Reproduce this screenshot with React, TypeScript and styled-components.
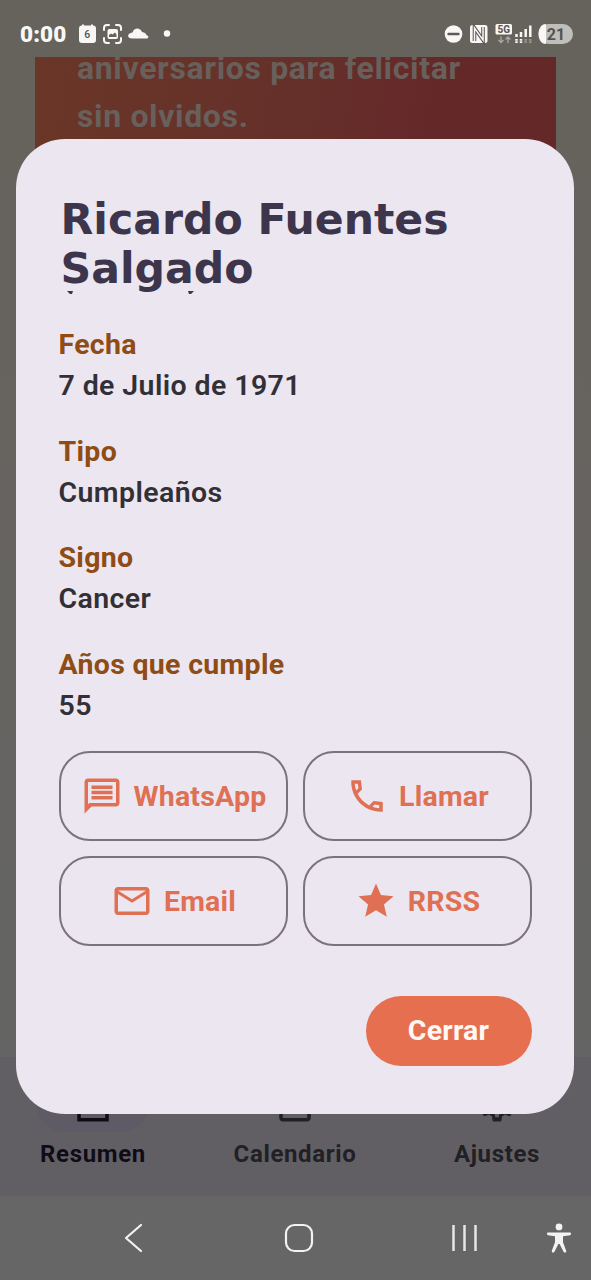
import React from "react";
import styled, { createGlobalStyle } from "styled-components";

const GlobalStyle = createGlobalStyle`
  * { box-sizing: border-box; }
  body { margin: 0; font-family: Roboto, "Liberation Sans", sans-serif; }
`;

const Screen = styled.div`
  position: relative;
  display: flex;
  flex-direction: column;
  width: 591px;
  height: 1280px;
  overflow: hidden;
  background: linear-gradient(#66635d 0, #66635d 75px, #666461 600px, #646464 1057px);
`;

const StatusBar = styled.header`
  display: flex;
  justify-content: space-between;
  flex: none;
  height: 57px;
  padding: 10px 18px 0 20px;
`;

const StatusGroup = styled.div`
  display: flex;
  align-items: center;
  height: 47px;
`;

const Clock = styled.span`
  width: 58px;
  font-size: 22.5px;
  font-weight: 900;
  letter-spacing: 0.1px;
  color: #f8f7f5;
`;

const Banner = styled.section`
  flex: none;
  height: 130px;
  margin: 0 35px;
  padding: 0 42px;
  overflow: hidden;
  background: linear-gradient(100deg, #6a3627 0%, #65302a 50%, #652829 75%, #652829 100%);
`;

const BannerText = styled.p`
  margin: -13px 0 0;
  font-size: 32px;
  font-weight: 700;
  line-height: 48px;
  letter-spacing: 0.65px;
  white-space: nowrap;
  color: #68605c;
`;

const Spacer = styled.div`
  flex: 1;
`;

const TabBar = styled.nav`
  display: flex;
  justify-content: space-between;
  flex: none;
  height: 139px;
  padding: 19px 23px 0 22px;
  background: #625f64;
`;

const Tab = styled.div<{ $active?: boolean }>`
  display: flex;
  flex-direction: column;
  align-items: center;
  width: 142px;
  font-size: 24px;
  font-weight: 700;
  line-height: 30px;
  letter-spacing: 0.65px;
  color: ${(p) => (p.$active ? "#100c17" : "#212025")};
`;

const TabPill = styled.div<{ $active?: boolean }>`
  display: flex;
  align-items: center;
  justify-content: center;
  width: 112px;
  height: 56px;
  margin-bottom: 7px;
  border-radius: 28px;
  background: ${(p) => (p.$active ? "#5e5a66" : "transparent")};
`;

const SystemBar = styled.footer`
  display: grid;
  grid-template-columns: 161px 1fr 1fr 46px;
  align-items: center;
  flex: none;
  height: 84px;
  padding-right: 10px;
  background: #666;
`;

const SystemButton = styled.div<{ $shift?: number }>`
  display: flex;
  padding-left: ${(p) => p.$shift ?? 0}px;
`;

const Overlay = styled.div`
  position: absolute;
  inset: 0;
  padding: 139px 17px 0 16px;
`;

const Dialog = styled.section`
  display: flex;
  flex-direction: column;
  height: 975px;
  padding: 56px 42px 48px 43px;
  border-radius: 49px;
  background: #ece6f0;
`;

const Title = styled.h1`
  margin: 0 0 -3px;
  padding-left: 1.5px;
  font-family: "DejaVu Sans", sans-serif;
  font-size: 42.6px;
  font-weight: 700;
  line-height: 49px;
  letter-spacing: 0;
  color: #3d354b;
`;

const TitleMarks = styled.svg`
  display: block;
  flex: none;
  margin-left: 5px;
`;

const Fields = styled.dl`
  display: flex;
  flex-direction: column;
  gap: 24.7px;
  margin: 29px 0 0;
`;

const Field = styled.div`
  font-size: 28.5px;
  line-height: 41px;
`;

const FieldLabel = styled.dt`
  margin-left: -0.5px;
  font-weight: 700;
  letter-spacing: 0.3px;
  color: #8f4c14;
`;

const FieldValue = styled.dd`
  margin: 0 0 0 -0.5px;
  font-weight: 600;
  letter-spacing: 0.4px;
  color: #323037;
`;

const Actions = styled.div`
  display: grid;
  grid-template-columns: 1fr 1fr;
  gap: 15px;
  margin-top: 25px;
`;

const ActionButton = styled.button`
  display: flex;
  align-items: center;
  justify-content: center;
  gap: 11px;
  height: 90px;
  padding: 0;
  border: 2px solid #7a7280;
  border-radius: 31px;
  background: transparent;
  font-family: inherit;
  font-size: 28.5px;
  font-weight: 700;
  letter-spacing: 0.2px;
  color: #df7053;
`;

const CloseButton = styled.button`
  align-self: flex-end;
  width: 166px;
  height: 70px;
  margin-top: auto;
  padding: 0 1px 2px 0;
  border: 0;
  border-radius: 35px;
  background: #e66f50;
  font-family: inherit;
  font-size: 28.5px;
  font-weight: 700;
  letter-spacing: 0.2px;
  color: #fff8f5;
`;

const Glyph = ({ d }: { d: string }) => (
  <svg width="42" height="42" viewBox="0 0 24 24" fill="currentColor" fillRule="evenodd">
    <path d={d} />
  </svg>
);

const icons = {
  message:
    "M4 2h16c1.1 0 2 .9 2 2v12c0 1.1-.9 2-2 2H6l-4 4V4c0-1.1.9-2 2-2zm0 2v12.8l.8-.8H20V4H4zm2 2h12v2H6V6zm0 3h12v2H6V9zm0 3h12v2H6v-2z",
  call: "M21 15.46l-5.27-.61-2.52 2.52c-2.83-1.44-5.15-3.75-6.59-6.59l2.53-2.53L8.54 3H3.03C2.45 13.18 10.82 21.55 21 20.97v-5.51zM5.05 5h1.7l.35 2.6-1.3 1.3C5.400 7.700 5.100 6.400 5.050 5zM19 17.25v1.7c-1.400-.05-2.700-.3-3.900-.75l1.300-1.300z",
  mail: "M22 6c0-1.1-.9-2-2-2H4c-1.1 0-2 .9-2 2v12c0 1.1.9 2 2 2h16c1.1 0 2-.9 2-2V6zm-2 0l-8 5-8-5h16zm0 12H4V8l8 5 8-5v10z",
  star: "M12 17.27L18.18 21l-1.64-7.03L22 9.24l-7.19-.61L12 2 9.19 8.63 2 9.24l5.46 4.73L5.82 21z",
  summary: "M3 4h18v18H3V4zm2 2v14h14V6H5z",
  calendar:
    "M5 4h14c1.1 0 2 .9 2 2v14c0 1.1-.9 2-2 2H5c-1.1 0-2-.9-2-2V6c0-1.1.9-2 2-2zm0 5v11h14V9H5z",
  settings:
    "M19.43 12.98c.04-.32.07-.64.07-.98s-.03-.66-.07-.98l2.11-1.65c.19-.15.24-.42.12-.64l-2-3.46c-.12-.22-.39-.3-.61-.22l-2.49 1c-.52-.4-1.08-.73-1.69-.98l-.38-2.65C14.46 2.18 14.25 2 14 2h-4c-.25 0-.46.18-.49.42l-.38 2.65c-.61.25-1.17.59-1.69.98l-2.49-1c-.22-.08-.49 0-.61.22l-2 3.46c-.13.22-.07.49.12.64l2.11 1.65c-.04.32-.07.65-.07.98s.03.66.07.98l-2.11 1.65c-.19.15-.24.42-.12.64l2 3.46c.12.22.39.3.61.22l2.49-1c.52.4 1.08.73 1.69.98l.38 2.65c.03.24.24.42.49.42h4c.25 0 .46-.18.49-.42l.38-2.65c.61-.25 1.17-.59 1.69-.98l2.49 1c.22.08.49 0 .61-.22l2-3.46c.12-.22.07-.49-.12-.64l-2.11-1.65zM13 19.500h-2l-.4-2.100-2-1-2.400 1-1-1.700 2-1.700v-4l-2-1.700 1-1.700 2.400 1 2-1L11 4h2l.4 2.600 2 1 2.400-1 1 1.700-2 1.700v4l2 1.700-1 1.700-2.400-1-2 1L13 19.500z",
};

const fields = [
  ["Fecha", "7 de Julio de 1971"],
  ["Tipo", "Cumpleaños"],
  ["Signo", "Cancer"],
  ["Años que cumple", "55"],
];

const actions = [
  { label: "WhatsApp", icon: icons.message },
  { label: "Llamar", icon: icons.call },
  { label: "Email", icon: icons.mail },
  { label: "RRSS", icon: icons.star },
];

const StatusLeftIcons = () => (
  <svg width="96" height="24" viewBox="0 0 96 24" fill="#f8f7f5">
    <path d="M4 3.500V2.500h2v1h7v-1h2v1q3 0 3 3v11.500q0 3-3 3H4q-3 0-3-3V6.500q0-3 3-3z" />
    <text x="9.3" y="16.3" textAnchor="middle" fontSize="10.5" fontWeight="500" fill="#55524d">6</text>
    <path d="M26 8V6q0-3 3-3h2M38 3h2q3 0 3 3v2M43 16v2q0 3-3 3h-2M31 21h-2q-3 0-3-3v-2" fill="none" stroke="#f8f7f5" strokeWidth="2" strokeLinecap="round" />
    <rect x="29.5" y="7" width="10.5" height="10" rx="2" />
    <path d="M31 15v-2l2-1.500 1.500 1 2.500-2 1.500 2v2.500z" fill="#66635d" />
    <path d="M54 16.500c-5 0-5.500-5 .5-6 1.500-5.500 8-5 9.500-.5 3 .3 3.500 1.500 4.500 3 2.500 1 2.500 3.500 0 3.500z" />
    <circle cx="89" cy="11.500" r="3.200" />
  </svg>
);

const StatusRightIcons = () => (
  <svg width="130" height="24" viewBox="0 0 130 24" fill="#f8f7f5">
    <circle cx="10.500" cy="12" r="8.800" />
    <path d="M5.500 12h10" stroke="#5d5a56" strokeWidth="2.400" strokeLinecap="round" />
    <rect x="27" y="3" width="17.500" height="18" rx="2.500" />
    <path d="M31.500 19V6l8.500 12V5" fill="none" stroke="#5d5a56" strokeWidth="3.600" />
    <path d="M31.500 19V6l8.500 12V5" fill="none" stroke="#f8f7f5" strokeWidth="1.500" />
    <rect x="52.500" y="2" width="16.500" height="10.500" rx="1.500" />
    <text x="60.700" y="10.700" textAnchor="middle" fontSize="10" fontWeight="800" fill="#5d5a56">5G</text>
    <path d="M58 14.500v6m-2.500-2.500l2.500 2.500 2.500-2.500M65 21v-6m-2.500 2.500l2.500-2.500 2.500 2.500" fill="none" stroke="#aaa8a4" strokeWidth="1.300" />
    <path d="M73.500 12v3M78 10v5M82.700 7v8M87.300 3.500v11.500" stroke="#f8f7f5" strokeWidth="2.500" />
    <path d="M73.500 17v4M78 17v4" stroke="#f8f7f5" strokeWidth="2.500" strokeDasharray="1.700 0.600" />
    <path d="M82.700 17v4M87.300 17v4" stroke="#99968f" strokeWidth="2.500" strokeDasharray="1.700 0.600" />
    <rect x="95.500" y="2" width="34.500" height="20" rx="10" fill="#bfbeba" />
    <path d="M103 2v20c-10 0-10-20 0-20z" />
    <text x="113" y="17.500" textAnchor="middle" fontSize="16" fontWeight="700" fill="#55534f">21</text>
  </svg>
);

export default function App() {
  return (
    <Screen>
      <GlobalStyle />
      <StatusBar>
        <StatusGroup>
          <Clock>0:00</Clock>
          <StatusLeftIcons />
        </StatusGroup>
        <StatusGroup>
          <StatusRightIcons />
        </StatusGroup>
      </StatusBar>
      <Banner>
        <BannerText>
          aniversarios para felicitar
          <br />
          sin olvidos.
        </BannerText>
      </Banner>
      <Spacer />
      <TabBar>
        <Tab $active>
          <TabPill $active><Glyph d={icons.summary} /></TabPill>
          Resumen
        </Tab>
        <Tab>
          <TabPill><Glyph d={icons.calendar} /></TabPill>
          Calendario
        </Tab>
        <Tab>
          <TabPill><Glyph d={icons.settings} /></TabPill>
          Ajustes
        </Tab>
      </TabBar>
      <SystemBar>
        <SystemButton $shift={123}>
          <svg width="20" height="30" viewBox="0 0 20 30" fill="none" stroke="#f3f3f3" strokeWidth="2.200" strokeLinecap="round" strokeLinejoin="round">
            <path d="M18 2L3 15l15 13" />
          </svg>
        </SystemButton>
        <SystemButton $shift={123}>
          <svg width="30" height="30" viewBox="0 0 30 30" fill="none" stroke="#f3f3f3" strokeWidth="2.200">
            <rect x="2" y="2" width="26" height="26" rx="8.500" />
          </svg>
        </SystemButton>
        <SystemButton $shift={102}>
          <svg width="28" height="30" viewBox="0 0 28 30" stroke="#e6e6e6" strokeWidth="2.500">
            <path d="M3.500 2v26M14.500 2v26M25.500 2v26" />
          </svg>
        </SystemButton>
        <SystemButton $shift={11}>
          <svg width="26" height="30" viewBox="0 0 26 30" fill="#f3f3f3">
            <circle cx="13" cy="3.900" r="3.400" />
            <path d="M2 9.500h22q1 0 1 1.200t-1 1.500l-7 1v6l3.200 8.500q.4 1.500-.9 1.900t-1.900-1L13.600 21h-1.200l-3.800 7.600q-.7 1.300-1.900 1t-.9-1.900L9 19.200v-6l-7-1q-1-.2-1-1.500t1-1.200z" />
          </svg>
        </SystemButton>
      </SystemBar>
      <Overlay>
        <Dialog role="dialog">
          <Title>Ricardo Fuentes Salgado</Title>
          <TitleMarks width="140" height="5" viewBox="0 0 140 5" fill="#3d354b">
            <path d="M3 1h6l-1 3H6zM124 1h6l-3 3h-2z" />
          </TitleMarks>
          <Fields>
            {fields.map(([label, value]) => (
              <Field key={label}>
                <FieldLabel>{label}</FieldLabel>
                <FieldValue>{value}</FieldValue>
              </Field>
            ))}
          </Fields>
          <Actions>
            {actions.map((a) => (
              <ActionButton key={a.label}>
                <Glyph d={a.icon} />
                {a.label}
              </ActionButton>
            ))}
          </Actions>
          <CloseButton>Cerrar</CloseButton>
        </Dialog>
      </Overlay>
    </Screen>
  );
}
